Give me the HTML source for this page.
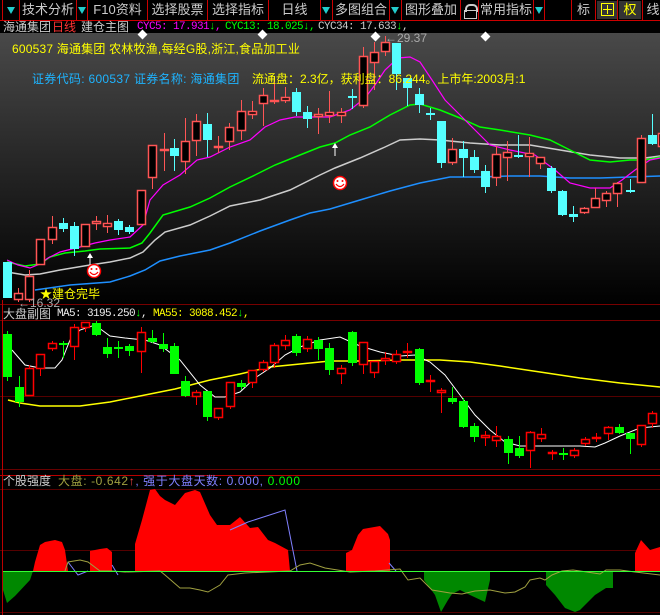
<!DOCTYPE html>
<html><head><meta charset="utf-8"><style>
*{margin:0;padding:0}
body{width:660px;height:615px;background:#000;overflow:hidden;position:relative;font-family:"Liberation Sans","Noto Sans CJK SC",sans-serif}
.t{position:absolute;white-space:nowrap;font-size:12px;line-height:13px}
.m{font-family:'Liberation Mono',monospace;font-size:11px;letter-spacing:-0.6px}
.tb{position:absolute;top:0;height:20px;line-height:20px;font-size:13px;color:#ccc;text-align:center}
.sep{position:absolute;top:0;width:1px;height:20px;background:#c00}
.tri{position:absolute;top:7px;width:0;height:0;border-left:4px solid transparent;border-right:4px solid transparent;border-top:7px solid #2cc}
</style></head><body>
<div style="position:absolute;left:0;top:33px;width:660px;height:272px;background:linear-gradient(#494949,#000)"></div>
<svg id="s" width="660" height="615" style="position:absolute;left:0;top:0"></svg>

<div style="position:absolute;left:0;top:20px;width:660px;height:1px;background:#c00"></div>
<div class="sep" style="left:2px"></div><div class="tri" style="left:7px"></div><div class="sep" style="left:19px"></div>
<div class="tb" style="left:20px;width:56px">技术分析</div>
<div class="sep" style="left:76px"></div><div class="tri" style="left:78px"></div><div class="sep" style="left:87px"></div>
<div class="tb" style="left:88px;width:59px">F10资料</div><div class="sep" style="left:147px"></div>
<div class="tb" style="left:148px;width:59px">选择股票</div><div class="sep" style="left:207px"></div>
<div class="tb" style="left:208px;width:60px">选择指标</div><div class="sep" style="left:268px"></div>
<div class="tb" style="left:269px;width:51px">日线</div><div class="sep" style="left:320px"></div><div class="tri" style="left:322px"></div>
<div class="sep" style="left:332px"></div>
<div class="tb" style="left:333px;width:56px">多图组合</div><div class="sep" style="left:389px"></div><div class="tri" style="left:391px"></div><div class="sep" style="left:401px"></div>
<div class="tb" style="left:402px;width:58px">图形叠加</div><div class="sep" style="left:460px"></div>
<div style="position:absolute;left:465px;top:4px;width:9px;height:6px;border:2px solid #ccc;border-bottom:none;border-radius:5px 5px 0 0"></div>
<div style="position:absolute;left:464px;top:10px;width:11px;height:7px;border:1px solid #ccc"></div>
<div class="sep" style="left:478px"></div>
<div class="tb" style="left:479px;width:54px">常用指标</div><div class="sep" style="left:533px"></div><div class="tri" style="left:535px"></div><div class="sep" style="left:544px"></div>
<div class="sep" style="left:571px"></div>
<div class="tb" style="left:572px;width:23px">标</div><div class="sep" style="left:595px"></div>
<div style="position:absolute;left:597px;top:1px;width:20px;height:18px;background:#333"></div>
<div style="position:absolute;left:601px;top:3px;width:11px;height:11px;border:1px solid #ff0"></div>
<div style="position:absolute;left:607px;top:5px;width:1px;height:9px;background:#ff0"></div>
<div style="position:absolute;left:603px;top:9px;width:9px;height:1px;background:#ff0"></div>
<div class="sep" style="left:617px"></div>
<div style="position:absolute;left:619px;top:1px;width:22px;height:18px;background:#333"></div>
<div class="tb" style="left:619px;width:22px;color:#ff0">权</div><div class="sep" style="left:642px"></div>
<div class="tb" style="left:643px;width:20px">线</div>

<div class="t" style="left:3px;top:21px;color:#ccc">海通集团</div>
<div class="t" style="left:52px;top:21px;color:#f33">日线</div>
<div class="t" style="left:81px;top:21px;color:#ccc">建仓主图</div>
<div class="t m" style="left:137px;top:21px;color:#f0f">CYC5: 17.931<span style="color:#0f0">↓</span>,</div>
<div class="t m" style="left:225px;top:21px;color:#0f0">CYC13: 18.025↓,</div>
<div class="t m" style="left:318px;top:21px;color:#ccc">CYC34: 17.633<span style="color:#0f0">↓</span>,</div>

<div class="t" style="left:12px;top:43px;color:#ff0;letter-spacing:0.2px">600537 海通集团 农林牧渔,每经G股,浙江,食品加工业</div>
<div class="t" style="left:32px;top:73px;color:#1eb4ff;letter-spacing:0.3px">证券代码: 600537 证券名称: 海通集团</div>
<div class="t" style="left:252px;top:73px;color:#ff0">流通盘：2.3亿，获利盘：86.244。上市年:2003月:1</div>
<div class="t" style="left:385px;top:32px;color:#aaa">←29.37</div>
<div class="t" style="left:40px;top:288px;color:#ff0">★建仓完毕</div>
<div class="t" style="left:18px;top:297px;color:#aaa">←16.32</div>

<div class="t" style="left:3px;top:308px;color:#ccc">大盘副图</div>
<div class="t m" style="left:57px;top:308px;color:#eee">MA5: 3195.250<span style="color:#0f0">↓</span>,</div>
<div class="t m" style="left:153px;top:308px;color:#ff0">MA55: 3088.452<span style="color:#0f0">↓</span>,</div>

<div class="t" style="left:3px;top:475px;color:#ccc">个股强度</div>
<div class="t" style="left:58px;top:475px;color:#a0a040;letter-spacing:0.6px">大盘: -0.642<span style="color:#f44">↑</span><span style="color:#8080ff">, 强于大盘天数: 0.000,</span> <span style="color:#0f0">0.000</span></div>

<script>
var S=document.getElementById('s'),h='';
function L(x1,y1,x2,y2,c){h+='<line x1="'+x1+'" y1="'+y1+'" x2="'+x2+'" y2="'+y2+'" stroke="'+c+'" stroke-width="1"/>';}
function P(pts,c,w){h+='<polyline fill="none" stroke="'+c+'" stroke-width="'+(w||1)+'" points="'+pts.map(function(p){return p.join(',')}).join(' ')+'"/>';}
function G(pts,c){h+='<polygon fill="'+c+'" points="'+pts.map(function(p){return p.join(',')}).join(' ')+'"/>';}
L(0,304.5,660,304.5,'#700');L(0,320.5,660,320.5,'#700');L(0,396.5,660,396.5,'#500');
L(0,469.5,660,469.5,'#600');L(0,475.5,660,475.5,'#b00');L(0,489.5,660,489.5,'#500');L(0,550.5,660,550.5,'#500');L(0,612.5,660,612.5,'#500');
L(2.5,300,2.5,615,'#b00');
P([[35,290],[70,285],[110,282],[130,276],[145,270],[160,261],[180,256],[210,250],[230,243],[260,231],[290,220],[310,213],[330,209],[360,200],[390,191],[420,183],[450,177],[480,177],[510,176],[540,176],[570,178],[600,178],[630,177],[660,176]],'#1e8fff',1.5);
P([[7,272],[25,275],[40,274],[60,270],[90,265],[110,262],[130,258],[143,252],[155,240],[165,232],[190,225],[210,216],[230,206],[260,200],[290,190],[320,175],[335,168],[360,158],[385,147],[400,140],[420,139],[440,140],[470,143],[500,145],[530,145],[560,150],[590,155],[620,158],[645,158],[660,156]],'#ccc',1.5);
P([[7,262],[25,266],[40,264],[50,257],[65,253],[85,251],[100,249],[130,248],[142,243],[150,233],[163,215],[190,207],[210,198],[230,187],[255,175],[275,165],[300,155],[320,147],[335,143],[350,135],[370,127],[390,115],[410,105],[420,104],[440,110],[460,118],[480,127],[500,130],[530,135],[550,140],[570,150],[590,160],[610,162],[630,160],[645,160],[660,157]],'#0f0',1.5);
P([[7,260],[18,265],[30,268],[40,264],[48,258],[60,252],[80,247],[95,243],[110,240],[130,237],[143,225],[150,200],[163,185],[180,175],[197,160],[210,157],[230,147],[250,140],[265,127],[280,120],[295,117],[330,117],[350,110],[365,98],[375,85],[385,70],[398,58],[410,57],[420,62],[432,80],[445,100],[460,115],[475,130],[490,145],[510,150],[535,155],[555,170],[570,183],[590,188],[610,188],[622,180],[635,170],[650,160],[660,158]],'#f0f',1.2);
var M=[[3,262,298,262,298,'c'],[14,293,300,288,302,'r'],[25,276,300,270,302,'r'],[36,239,265,239,265,'r'],[48,227,240,216,244,'r'],[59,223,229,218,232,'c'],[70,226,249,222,256,'c'],[81,224,247,224,247,'r'],[92,221,224,216,230,'r'],[103,223,227,215,233,'r'],[114,221,230,219,235,'c'],[125,227,232,225,234,'c'],[137,190,225,190,225,'r'],[148,145,178,145,189,'r'],[160,149,151,133,171,'r'],[170,148,156,139,171,'c'],[181,141,162,118,174,'r'],[192,121,141,114,156,'r'],[203,124,140,113,157,'c'],[214,146,148,136,153,'r'],[225,127,142,123,150,'r'],[237,111,131,100,140,'r'],[248,111,115,101,119,'r'],[259,95,104,88,126,'r'],[270,100,102,77,104,'r'],[281,97,101,87,103,'r'],[292,92,112,88,116,'c'],[303,112,119,106,128,'c'],[314,114,117,108,134,'r'],[325,112,116,91,123,'r'],[337,112,116,108,123,'r'],[348,96,98,89,109,'c'],[359,56,106,47,108,'r'],[370,52,63,42,90,'r'],[381,42,52,36,56,'r'],[392,43,74,43,90,'c'],[403,78,88,78,106,'c'],[415,94,105,88,113,'c'],[426,113,115,108,120,'c'],[437,121,163,121,168,'c'],[448,149,163,138,165,'r'],[459,149,158,141,177,'c'],[470,157,170,150,173,'c'],[481,171,187,165,193,'c'],[492,154,178,146,186,'r'],[503,152,158,141,181,'r'],[514,155,157,135,158,'c'],[525,153,157,137,177,'r'],[536,157,164,157,169,'r'],[547,168,191,166,193,'c'],[558,191,215,190,216,'c'],[569,214,217,206,222,'c'],[580,208,213,207,214,'r'],[591,198,208,188,208,'r'],[602,193,201,191,207,'r'],[613,183,194,182,207,'r'],[626,190,191,179,193,'c'],[637,138,183,135,183,'r'],[648,135,144,114,145,'c'],[658,133,147,130,150,'r']];
function C(a,red,fill){var x=a[0],cx=x+4.5,c=a[5]=='r'?red:fill;
 L(cx,a[3],cx,a[1],c);L(cx,a[2],cx,a[4],c);
 if(a[5]=='r'){h+='<rect x="'+(x+0.5)+'" y="'+(a[1]+0.5)+'" width="8" height="'+Math.max(a[2]-a[1]-1,1)+'" fill="#000" stroke="'+red+'" stroke-width="1.5"/>';}
 else h+='<rect x="'+x+'" y="'+a[1]+'" width="9" height="'+Math.max(a[2]-a[1],2)+'" fill="'+fill+'"/>';}
M.forEach(function(a){C(a,'#f55','#55ffff')});
[[142,34],[262,34],[375,36],[485,36]].forEach(function(p){h+='<rect x="'+(p[0]-3)+'" y="'+(p[1]-3)+'" width="7" height="7" fill="#fff" transform="rotate(45 '+(p[0]+0.5)+' '+(p[1]+0.5)+')"/>'});
[[90,258],[335,148]].forEach(function(p){L(p[0],p[1]-4,p[0],p[1]+8,'#fff');h+='<polygon points="'+(p[0]-3)+','+(p[1])+' '+p[0]+','+(p[1]-5)+' '+(p[0]+3)+','+p[1]+'" fill="#fff"/>'});
[[94,271],[340,183]].forEach(function(p){var x=p[0],y=p[1];h+='<circle cx="'+x+'" cy="'+y+'" r="6.5" fill="#fff" stroke="#f00" stroke-width="1.5"/><circle cx="'+(x-2.5)+'" cy="'+(y-2)+'" r="1" fill="#f00"/><circle cx="'+(x+2.5)+'" cy="'+(y-2)+'" r="1" fill="#f00"/><path d="M'+(x-4)+' '+(y+1)+' Q'+x+' '+(y+6)+' '+(x+4)+' '+(y+1)+'" stroke="#f00" fill="none" stroke-width="1.3"/>'});
P([[8,400],[20,403],[40,406],[80,406],[110,402],[140,396],[175,389],[210,380],[240,374],[270,367],[300,364],[330,361],[360,361],[400,360],[440,360],[470,362],[500,366],[540,372],[580,378],[620,383],[660,387]],'#ff0',1.5);
P([[12,350],[25,365],[40,368],[55,368],[62,360],[70,340],[80,330],[95,325],[110,336],[125,338],[145,340],[160,345],[180,360],[200,385],[215,397],[225,397],[240,392],[255,378],[270,368],[285,355],[300,347],[320,340],[340,337],[360,346],[380,352],[400,356],[415,355],[430,362],[445,375],[460,395],[475,415],[490,430],[505,442],[520,446],[540,446],[560,446],[580,446],[595,447],[605,443],[620,436],[640,428],[660,426]],'#fff',1);
var D=[[3,334,377,331,381,'g'],[15,387,402,376,407,'g'],[25,368,396,365,396,'r'],[36,354,369,354,376,'r'],[48,343,349,341,351,'r'],[59,343,345,341,358,'g'],[70,327,347,324,360,'r'],[81,322,328,322,332,'r'],[92,323,335,321,336,'g'],[103,347,354,338,358,'g'],[114,347,349,341,358,'g'],[125,346,351,344,356,'g'],[137,332,352,327,373,'r'],[148,338,342,330,343,'g'],[159,344,349,333,352,'g'],[170,346,374,343,374,'g'],[181,381,396,376,397,'g'],[192,392,397,390,405,'r'],[203,391,417,391,421,'g'],[214,408,418,408,420,'r'],[226,382,407,382,409,'r'],[237,383,387,380,390,'g'],[248,370,383,370,388,'r'],[259,362,370,360,372,'r'],[270,345,363,343,368,'r'],[281,340,346,335,350,'r'],[292,336,353,334,356,'g'],[303,339,349,336,352,'r'],[314,340,349,337,360,'g'],[325,348,370,343,375,'g'],[337,368,374,365,384,'r'],[348,332,363,331,366,'g'],[359,342,365,342,374,'r'],[370,361,373,361,378,'r'],[381,358,361,352,365,'r'],[392,354,362,350,364,'r'],[403,351,353,343,358,'r'],[415,349,383,348,385,'g'],[426,380,382,375,392,'r'],[437,390,393,388,413,'r'],[448,398,402,387,404,'g'],[459,401,427,398,428,'g'],[470,426,437,423,442,'g'],[481,435,438,431,446,'r'],[492,436,441,426,447,'r'],[504,439,453,436,464,'g'],[515,448,456,436,458,'g'],[526,432,451,431,468,'r'],[537,434,439,428,442,'r'],[548,452,454,450,460,'r'],[559,453,455,448,460,'g'],[570,450,456,448,458,'r'],[581,439,444,437,446,'r'],[592,437,439,433,442,'r'],[604,427,434,426,440,'r'],[615,427,433,424,434,'g'],[626,433,439,433,454,'g'],[637,425,445,425,447,'r'],[648,413,424,411,428,'r']];
D.forEach(function(a){C(a,'#f00','#0f0')});
G([[33,571],[35,562],[40,545],[45,542],[55,540],[62,542],[65,550],[68,571]],'#f00');
G([[90,571],[90,551],[100,549],[107,548],[112,552],[112,571]],'#f00');
G([[135,571],[135,544],[142,520],[150,490],[155,489],[160,496],[165,500],[175,505],[185,493],[195,490],[200,492],[210,515],[217,525],[230,525],[240,517],[250,528],[258,527],[268,540],[275,543],[288,550],[290,571]],'#f00');
G([[346,571],[346,553],[352,550],[358,535],[363,529],[380,526],[388,534],[390,540],[390,571]],'#f00');
G([[635,571],[635,553],[641,540],[650,550],[660,547],[660,571]],'#f00');
G([[3,571],[3,590],[7,603],[15,596],[30,580],[33,571]],'#080');
G([[424,571],[424,580],[435,595],[441,612],[448,600],[452,594],[460,590],[470,595],[485,602],[490,580],[490,571]],'#080');
G([[546,571],[546,585],[555,595],[565,608],[575,612],[580,610],[595,595],[606,588],[613,588],[613,571]],'#080');
P([[230,530],[248,522],[285,510],[297,571]],'#8080ff',1);
P([[68,562],[78,575],[88,571]],'#8080ff',1);P([[112,565],[118,575]],'#8080ff',1);P([[389,563],[396,571]],'#8080ff',1);
P([[65,571],[68,562],[80,560],[88,562],[100,571],[112,571],[125,572],[160,571],[165,575],[180,588],[190,588],[200,590],[208,592],[220,585],[228,575],[245,573],[290,571],[300,565],[310,563],[325,568],[350,572],[375,571],[400,569],[408,580],[420,578],[432,590],[450,593],[462,594],[475,591],[490,590],[505,593],[515,592],[525,587],[530,580],[540,578],[545,580],[552,575],[562,571],[573,570],[580,571],[600,574],[606,570],[620,570],[635,572],[660,575]],'#a0a040',1);
L(3,571.5,660,571.5,'#3f3');
S.innerHTML=h;
</script>
</body></html>
